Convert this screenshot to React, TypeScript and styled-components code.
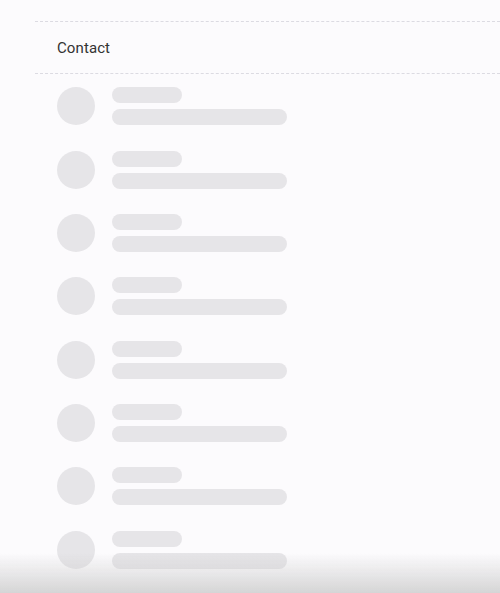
import React from "react";
import styled, { createGlobalStyle } from "styled-components";

const Global = createGlobalStyle`
  html, body { margin: 0; padding: 0; background: #fcfbfd; }
  body { font-family: Roboto, "Noto Sans", Arial, sans-serif; overflow: hidden; }
`;

const Page = styled.div`
  height: 593px;
  padding-top: 21px;
  padding-left: 35px;
  box-sizing: border-box;
  overflow: hidden;
`;

const Header = styled.div`
  height: 51px;
  border-top: 1px dashed #dcdbe2;
  border-bottom: 1px dashed #dcdbe2;
  display: flex;
  align-items: center;
  padding-left: 22px;
  font-size: 15px;
  color: #333;
  letter-spacing: 0.1px;
`;

const List = styled.div`
  display: flex;
  flex-direction: column;
  padding-left: 22px;
  padding-top: 0.5px;
`;

const Row = styled.div`
  display: flex;
  align-items: center;
  gap: 17px;
  padding: 12.7px 0;
`;

const Avatar = styled.div`
  width: 38px;
  height: 38px;
  border-radius: 50%;
  background: #e6e5e8;
  flex: none;
`;

const Lines = styled.div`
  display: flex;
  flex-direction: column;
  gap: 6px;
`;

const Bar = styled.div<{ $w: number }>`
  width: ${(p) => p.$w}px;
  height: 16px;
  border-radius: 8px;
  background: #e6e5e8;
`;

const Shade = styled.div`
  position: fixed;
  left: 0;
  right: 0;
  bottom: 0;
  height: 40px;
  background: linear-gradient(to bottom, rgba(200, 200, 200, 0), rgba(200, 200, 200, 0.75));
  pointer-events: none;
`;

export default function App() {
  const rows = Array.from({ length: 9 });
  return (
    <>
      <Global />
      <Page>
        <Header>Contact</Header>
        <List>
          {rows.map((_, i) => (
            <Row key={i}>
              <Avatar />
              <Lines>
                <Bar $w={70} />
                <Bar $w={175} />
              </Lines>
            </Row>
          ))}
        </List>
      </Page>
      <Shade />
    </>
  );
}
